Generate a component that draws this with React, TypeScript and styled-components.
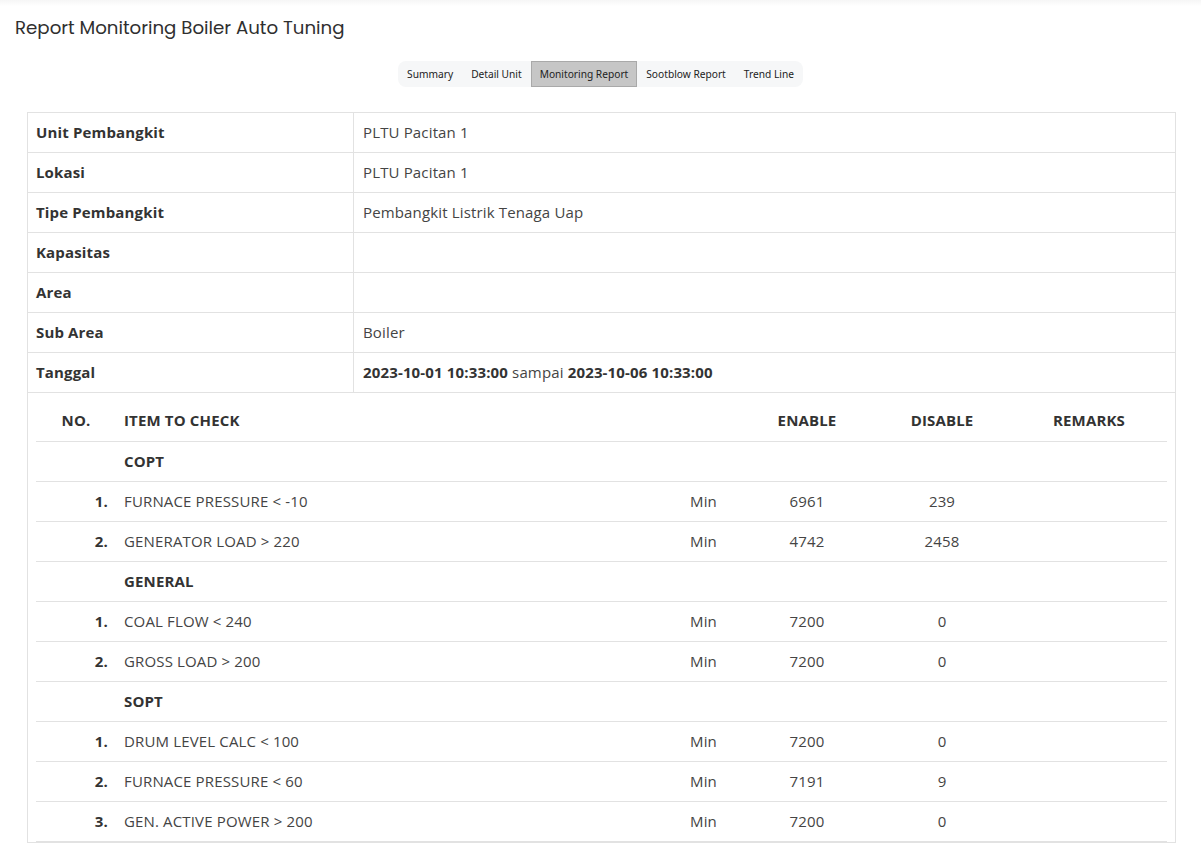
import React from "react";
import styled, { createGlobalStyle } from "styled-components";

const GlobalStyle = createGlobalStyle`
  html, body { margin: 0; padding: 0; background: #ffffff; }
  body { font-family: "Open Sans", "Noto Sans", sans-serif; color: #333; }
  * { box-sizing: border-box; }
`;

const Page = styled.div`
  width: 1201px;
  min-height: 852px;
  background: linear-gradient(#f6f6f6 0px, #ffffff 6px);
`;

const Title = styled.h1`
  margin: 0;
  padding: 17px 15px 0 15px;
  height: 61px;
  font-family: "Poppins", "Inter", "Lato", sans-serif;
  font-weight: 400;
  font-size: 18.2px;
  line-height: 22px;
  color: #2f2f2f;
`;

const TabBar = styled.div`
  display: flex;
  justify-content: center;
  height: 51px;
`;

const Tabs = styled.div`
  display: flex;
  height: 26px;
  background: #f6f7f8;
  border-radius: 8px;
`;

const Tab = styled.div<{ $active?: boolean }>`
  display: flex;
  align-items: center;
  padding: 0 8px;
  font-family: "Noto Sans", "Open Sans", sans-serif;
  font-size: 10.2px;
  color: #222;
  background: ${(p) => (p.$active ? "#c6c6c6" : "transparent")};
  border: 1px solid ${(p) => (p.$active ? "#a9a9a9" : "transparent")};
`;

const Content = styled.div`
  padding: 0 26px 0 27px;
`;

const InfoTable = styled.table`
  width: 100%;
  border-collapse: collapse;
  border: 1px solid #e2e2e2;
  font-size: 15px;
  letter-spacing: 0.15px;
`;

const Label = styled.td`
  width: 326px;
  padding: 9px 8px;
  line-height: 21px;
  font-weight: 700;
  color: #333;
  border: 1px solid #e2e2e2;
`;

const Value = styled.td`
  padding: 9px 9px;
  line-height: 21px;
  color: #444;
  border: 1px solid #e2e2e2;
`;

const Strong = styled.b`
  font-weight: 700;
  color: #333;
`;

const NestedCell = styled.td`
  padding: 8px 8px 0 8px;
  border-left: 1px solid #e2e2e2;
  border-right: 1px solid #e2e2e2;
`;

const CheckTable = styled.table`
  width: 100%;
  border-collapse: collapse;
  table-layout: fixed;
  font-size: 15px;
  letter-spacing: 0.15px;
`;

const Th = styled.th<{ $w: number; $align?: string }>`
  width: ${(p) => p.$w}px;
  padding: 9px 8px 10px;
  line-height: 21px;
  font-weight: 700;
  text-align: ${(p) => p.$align || "center"};
  color: #333;
  border-bottom: 1px solid #e2e2e2;
`;

const Td = styled.td<{ $align?: string; $bold?: boolean }>`
  padding: 9px 8px;
  line-height: 21px;
  text-align: ${(p) => p.$align || "left"};
  font-weight: ${(p) => (p.$bold ? 700 : 400)};
  color: ${(p) => (p.$bold ? "#333" : "#444")};
  border-bottom: 1px solid #e2e2e2;
  white-space: nowrap;
`;

const info: [string, React.ReactNode][] = [
  ["Unit Pembangkit", "PLTU Pacitan 1"],
  ["Lokasi", "PLTU Pacitan 1"],
  ["Tipe Pembangkit", "Pembangkit Listrik Tenaga Uap"],
  ["Kapasitas", ""],
  ["Area", ""],
  ["Sub Area", "Boiler"],
  [
    "Tanggal",
    <>
      <Strong>2023-10-01 10:33:00</Strong> sampai <Strong>2023-10-06 10:33:00</Strong>
    </>,
  ],
];

type Group = { name: string; items: [string, string, string][] };

const groups: Group[] = [
  {
    name: "COPT",
    items: [
      ["FURNACE PRESSURE < -10", "6961", "239"],
      ["GENERATOR LOAD > 220", "4742", "2458"],
    ],
  },
  {
    name: "GENERAL",
    items: [
      ["COAL FLOW < 240", "7200", "0"],
      ["GROSS LOAD > 200", "7200", "0"],
    ],
  },
  {
    name: "SOPT",
    items: [
      ["DRUM LEVEL CALC < 100", "7200", "0"],
      ["FURNACE PRESSURE < 60", "7191", "9"],
      ["GEN. ACTIVE POWER > 200", "7200", "0"],
    ],
  },
];

export default function App() {
  const tabs = ["Summary", "Detail Unit", "Monitoring Report", "Sootblow Report", "Trend Line"];
  return (
    <Page>
      <GlobalStyle />
      <Title>Report Monitoring Boiler Auto Tuning</Title>
      <TabBar>
        <Tabs>
          {tabs.map((t) => (
            <Tab key={t} $active={t === "Monitoring Report"}>
              {t}
            </Tab>
          ))}
        </Tabs>
      </TabBar>
      <Content>
        <InfoTable>
          <tbody>
            {info.map(([k, v]) => (
              <tr key={k}>
                <Label>{k}</Label>
                <Value>{v}</Value>
              </tr>
            ))}
            <tr>
              <NestedCell colSpan={2}>
                <CheckTable>
                  <thead>
                    <tr>
                      <Th $w={80}>NO.</Th>
                      <Th $w={566} $align="left">ITEM TO CHECK</Th>
                      <Th $w={59}></Th>
                      <Th $w={132}>ENABLE</Th>
                      <Th $w={138}>DISABLE</Th>
                      <Th $w={156}>REMARKS</Th>
                    </tr>
                  </thead>
                  <tbody>
                    {groups.map((g) => (
                      <React.Fragment key={g.name}>
                        <tr>
                          <Td />
                          <Td $bold>{g.name}</Td>
                          <Td />
                          <Td />
                          <Td />
                          <Td />
                        </tr>
                        {g.items.map(([item, en, dis], i) => (
                          <tr key={item}>
                            <Td $align="right" $bold>{i + 1}.</Td>
                            <Td>{item}</Td>
                            <Td>Min</Td>
                            <Td $align="center">{en}</Td>
                            <Td $align="center">{dis}</Td>
                            <Td />
                          </tr>
                        ))}
                      </React.Fragment>
                    ))}
                  </tbody>
                </CheckTable>
              </NestedCell>
            </tr>
          </tbody>
        </InfoTable>
      </Content>
    </Page>
  );
}
